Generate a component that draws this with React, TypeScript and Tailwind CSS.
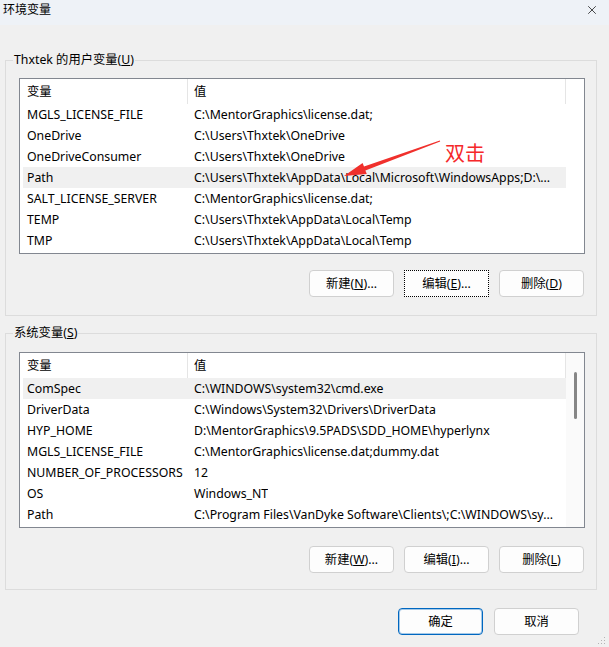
import { X } from "lucide-react";

type Row = [string, string];

const userRows: Row[] = [
  ["MGLS_LICENSE_FILE", "C:\\MentorGraphics\\license.dat;"],
  ["OneDrive", "C:\\Users\\Thxtek\\OneDrive"],
  ["OneDriveConsumer", "C:\\Users\\Thxtek\\OneDrive"],
  ["Path", "C:\\Users\\Thxtek\\AppData\\Local\\Microsoft\\WindowsApps;D:\\..."],
  ["SALT_LICENSE_SERVER", "C:\\MentorGraphics\\license.dat;"],
  ["TEMP", "C:\\Users\\Thxtek\\AppData\\Local\\Temp"],
  ["TMP", "C:\\Users\\Thxtek\\AppData\\Local\\Temp"],
];

const sysRows: Row[] = [
  ["ComSpec", "C:\\WINDOWS\\system32\\cmd.exe"],
  ["DriverData", "C:\\Windows\\System32\\Drivers\\DriverData"],
  ["HYP_HOME", "D:\\MentorGraphics\\9.5PADS\\SDD_HOME\\hyperlynx"],
  ["MGLS_LICENSE_FILE", "C:\\MentorGraphics\\license.dat;dummy.dat"],
  ["NUMBER_OF_PROCESSORS", "12"],
  ["OS", "Windows_NT"],
  ["Path", "C:\\Program Files\\VanDyke Software\\Clients\\;C:\\WINDOWS\\sy..."],
];

function VarList({ rows, selected, scroll }: { rows: Row[]; selected: number; scroll?: boolean }) {
  return (
    <div className="flex w-[566px] border border-[#828790] bg-white">
      {/* columns + rows */}
      <div className="w-[546px] pb-[2px]">
        <div className="flex h-[25px] items-center border-r border-[#e5e5e5]">
          <div className="flex h-full w-[168px] items-center border-r border-[#e5e5e5] pl-[7px]">变量</div>
          <div className="pl-[6px]">值</div>
        </div>
        <div className="pl-[3px]">
          {rows.map(([name, value], i) => (
            <div
              key={name + i}
              className={`flex h-[21px] items-center whitespace-nowrap ${i === selected ? "bg-[#f0f0f0]" : ""}`}
            >
              <div className="w-[165px] shrink-0 overflow-hidden pl-[4px]">{name}</div>
              <div className="overflow-hidden pl-[6px]">{value}</div>
            </div>
          ))}
        </div>
      </div>
      {/* scrollbar area */}
      {scroll ? (
        <div className="flex w-[18px] justify-center bg-[#fafafa]">
          <div className="mt-[19px] h-[47px] w-[3px] rounded-full bg-[#868686]" />
        </div>
      ) : (
        <div className="w-[18px]" />
      )}
    </div>
  );
}

function Btn({ children, focus, primary }: { children: React.ReactNode; focus?: boolean; primary?: boolean }) {
  return (
    <button
      className={`flex h-[27px] w-[85px] items-center justify-center rounded-[4px] bg-[#fdfdfd] ${
        focus
          ? "border border-dotted border-black rounded-none"
          : primary
          ? "border border-[#0067c0] shadow-[inset_0_0_0_1px_rgba(0,103,192,0.35)]"
          : "border border-[#d0d0d0]"
      }`}
    >
      {children}
    </button>
  );
}

export default function App() {
  return (
    <div
      className="relative flex h-[647px] w-[609px] flex-col bg-[#f0f0f0] text-[12.3px] leading-[16px] text-black"
      style={{ fontFamily: '"Noto Sans", "Noto Sans CJK SC", sans-serif' }}
    >
      {/* title bar */}
      <div className="flex h-[25px] items-start justify-between bg-[#eef2f7] pl-[3px] pr-[10px] pt-[2px]">
        <span className="text-[12px]">环境变量</span>
        <X size={14} strokeWidth={1.2} className="mt-[1px]" />
      </div>

      <div className="flex flex-col pl-[5px] pr-[12px]">
        <fieldset className="mt-[27px] border border-[#dcdcdc] pb-[18px] pl-[13px] pr-[11px] pt-[10px]">
          <legend className="ml-[-6px] px-[1px] leading-[16px]">
            Thxtek 的用户变量(<span className="underline">U</span>)
          </legend>
          <VarList rows={userRows} selected={3} />
          <div className="mt-[16px] flex justify-end gap-[10px] pr-[1px]">
            <Btn>新建(<span className="underline">N</span>)...</Btn>
            <Btn focus>编辑(<span className="underline">E</span>)...</Btn>
            <Btn>删除(<span className="underline">D</span>)</Btn>
          </div>
        </fieldset>

        <fieldset className="mt-[9px] border border-[#dcdcdc] pb-[16px] pl-[13px] pr-[11px] pt-[11px]">
          <legend className="ml-[-6px] px-[1px] leading-[16px]">
            系统变量(<span className="underline">S</span>)
          </legend>
          <VarList rows={sysRows} selected={0} scroll />
          <div className="mt-[18px] flex justify-end gap-[10px] pr-[1px]">
            <Btn>新建(<span className="underline">W</span>)...</Btn>
            <Btn>编辑(<span className="underline">I</span>)...</Btn>
            <Btn>删除(<span className="underline">L</span>)</Btn>
          </div>
        </fieldset>

        <div className="mt-[18px] flex justify-end gap-[11px] pr-[18px]">
          <Btn primary>确定</Btn>
          <Btn>取消</Btn>
        </div>
      </div>

      {/* annotation */}
      <svg className="pointer-events-none absolute left-0 top-0" width="609" height="647">
        <polygon
          points="439.8,140.5 364,166.6 362.6,162.9 344,176 366.8,174.1 365.4,170.4 440.2,141.5"
          fill="#f0302c"
        />
        <g fill="#b4b4b4">
          <rect x="604" y="637" width="1" height="1" />
          <rect x="601" y="640" width="1" height="1" />
          <rect x="604" y="640" width="1" height="1" />
          <rect x="598" y="643" width="1" height="1" />
          <rect x="601" y="643" width="1" height="1" />
          <rect x="604" y="643" width="1" height="1" />
        </g>
      </svg>
      <span
        className="absolute left-[445px] top-[141px] text-[20px] leading-[24px] text-[#f5282a]"
        style={{ fontFamily: '"Noto Sans CJK SC", sans-serif' }}
      >
        双击
      </span>
    </div>
  );
}
